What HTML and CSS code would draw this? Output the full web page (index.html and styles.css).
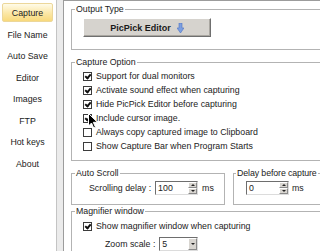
FILE: index.html
```html
<!DOCTYPE html>
<html lang="en">
<head>
    <meta charset="UTF-8">
    <meta name="viewport" content="width=device-width, initial-scale=1.0">
    <title>PicPick Options - Capture</title>
    <link rel="stylesheet" href="styles.css">
</head>
<body>

    <div class="app">
        <nav class="menu">
            <div class="menu-item active">Capture</div>
            <div class="menu-item">File Name</div>
            <div class="menu-item">Auto Save</div>
            <div class="menu-item">Editor</div>
            <div class="menu-item">Images</div>
            <div class="menu-item">FTP</div>
            <div class="menu-item">Hot keys</div>
            <div class="menu-item">About</div>
        </nav>

        <main class="panel">
            <fieldset class="group">
                <legend>Output Type</legend>
                <div class="group-body output-body">
                    <button class="editor-btn">
                        PicPick Editor
                        <svg width="7" height="10" viewBox="0 0 7 10">
                            <path d="M2 0h3v5h2L3.5 10 0 5h2z" fill="#7c9fe0" stroke="#4f74c4" stroke-width="0.6"/>
                        </svg>
                    </button>
                </div>
            </fieldset>

            <fieldset class="group">
                <legend>Capture Option</legend>
                <div class="group-body options-body">
                    <div class="check"><span class="box checked"></span>Support for dual monitors</div>
                    <div class="check"><span class="box checked"></span>Activate sound effect when capturing</div>
                    <div class="check"><span class="box checked"></span>Hide PicPick Editor before capturing</div>
                    <div class="check cursor-row">
                        <span class="box checked"></span>Include cursor image.
                        <!-- mouse pointer caught in the screenshot -->
                        <svg class="pointer" width="10" height="16" viewBox="0 0 10 16">
                            <path d="M0.5 0.5v12.5l3-3 2.2 5 1.8-0.8-2.2-4.9h4.2z" fill="#000" stroke="#fff" stroke-width="1"/>
                        </svg>
                    </div>
                    <div class="check"><span class="box"></span>Always copy captured image to Clipboard</div>
                    <div class="check"><span class="box"></span>Show Capture Bar when Program Starts</div>
                </div>
            </fieldset>

            <div class="pair">
                <fieldset class="group scroll-group">
                    <legend>Auto Scroll</legend>
                    <div class="group-body field-row scroll-body">
                        <span>Scrolling delay :</span>
                        <div class="spin">
                            <span class="spin-input">100</span>
                            <span class="spin-btns"><i class="up"></i><i class="down"></i></span>
                        </div>
                        <span>ms</span>
                    </div>
                </fieldset>
                <fieldset class="group delay-group">
                    <legend>Delay before capture</legend>
                    <div class="group-body field-row delay-body">
                        <div class="spin">
                            <span class="spin-input">0</span>
                            <span class="spin-btns"><i class="up"></i><i class="down"></i></span>
                        </div>
                        <span>ms</span>
                    </div>
                </fieldset>
            </div>

            <fieldset class="group">
                <legend>Magnifier window</legend>
                <div class="group-body magnifier-body">
                    <div class="check"><span class="box checked"></span>Show magnifier window when capturing</div>
                    <div class="field-row zoom-row">
                        <span>Zoom scale :</span>
                        <div class="select"><span class="select-value">5</span><span class="select-btn"><i class="down"></i></span></div>
                    </div>
                </div>
            </fieldset>
        </main>
    </div>

</body>
</html>
```

FILE: styles.css
```css
html, body {
    margin: 0;
    padding: 0;
    overflow: hidden;
}
body {
    font-family: "Liberation Sans", Arial, sans-serif;
    font-size: 8.8px;
    color: #222;
    background-color: #ebebeb;
}
.app {
    display: flex;
    width: 380px;
    height: 251px;
}
.menu {
    width: 51px;
    flex-shrink: 0;
    padding: 3px 3px 0 2px;
    background: white;
    border-right: 1px solid #c4c4c4;
    display: flex;
    flex-direction: column;
    gap: 2.5px;
}
.menu-item {
    height: 19px;
    line-height: 19px;
    text-align: center;
    border: 1px solid transparent;
    box-sizing: border-box;
}
.menu-item.active {
    background: linear-gradient(#fffbe8, #fbe7a6 55%, #f8d97c);
    border-color: #ecd79a;
    border-radius: 2px;
}
.panel {
    flex: 1;
    margin-left: 6px;
    padding: 0 0 0 7px;
    background: white;
    border-left: 1px solid #9c9c9c;
    border-top: 1px solid #9c9c9c;
}
.group {
    margin: 0;
    padding: 0;
    border: 1px solid #b3b3b3;
    box-shadow: inset 1px 1px 0 #fff;
    min-width: 0;
}
.group legend {
    margin-left: 3px;
    padding: 0 1px;
    line-height: 12px;
}
.panel > .group:first-child {
    margin-top: 2px;
}
.output-body {
    padding: 3px 0 12px 11px;
}
.editor-btn {
    width: 128px;
    height: 19px;
    padding: 0;
    font-family: inherit;
    font-size: 9px;
    font-weight: bold;
    color: #1a1a1a;
    background: #d6d3ce;
    border: 1px solid;
    border-color: #fff #6f6f6f #6f6f6f #fff;
    box-shadow: inset -1px -1px 0 #a9a6a0;
    display: flex;
    align-items: center;
    justify-content: center;
    gap: 6px;
}
.panel > .group + .group,
.panel > .pair {
    margin-top: 6px;
}
.options-body {
    padding: 1px 0 7px 11px;
}
.check {
    height: 14px;
    display: flex;
    align-items: center;
    gap: 4px;
    white-space: nowrap;
}
.box {
    width: 9px;
    height: 9px;
    box-sizing: border-box;
    border: 1px solid #3c3c3c;
    background: white;
    flex-shrink: 0;
    position: relative;
}
.box.checked::after {
    content: "";
    position: absolute;
    left: 1px;
    top: 0px;
    width: 2px;
    height: 4px;
    border: solid #111;
    border-width: 0 2px 2px 0;
    transform: rotate(40deg);
    margin-left: 1px;
}
.cursor-row {
    position: relative;
}
.pointer {
    position: absolute;
    left: 5px;
    top: 2px;
}
.pair {
    display: flex;
    gap: 8px;
}
.scroll-group {
    width: 152px;
    flex-shrink: 0;
}
.delay-group {
    flex: 1;
}
.delay-group legend {
    margin-left: 2px;
    letter-spacing: -0.1px;
}
.field-row {
    display: flex;
    align-items: center;
    gap: 4px;
    white-space: nowrap;
}
.scroll-body {
    height: 16px;
    padding: 1px 0 8px 17px;
}
.delay-body {
    height: 16px;
    padding: 1px 0 8px 12px;
    gap: 3px;
}
.spin {
    display: flex;
    height: 14px;
    box-sizing: border-box;
    border: 1px solid;
    border-color: #6e6e6e #dcdcdc #dcdcdc #6e6e6e;
}
.spin-input {
    width: 30px;
    padding-left: 2px;
    line-height: 12px;
    background: white;
}
.spin-btns {
    width: 9px;
    display: flex;
    flex-direction: column;
}
.spin-btns i,
.select-btn {
    flex: 1;
    background: #d8d5d0;
    border: 1px solid;
    border-color: #fff #8a8a8a #8a8a8a #fff;
    position: relative;
}
.spin-btns i::after,
.select-btn i::after {
    content: "";
    position: absolute;
    left: 50%;
    top: 50%;
    margin: -1px 0 0 -2px;
    border-left: 2px solid transparent;
    border-right: 2px solid transparent;
}
.up::after {
    border-bottom: 2px solid #222;
}
.down::after {
    border-top: 2px solid #222;
}
.magnifier-body {
    padding: 2px 0 0 11px;
}
.zoom-row {
    height: 14px;
    margin-top: 4px;
    padding-left: 22px;
    gap: 4px;
}
.select {
    display: flex;
    width: 39px;
    height: 14px;
    box-sizing: border-box;
    border: 1px solid;
    border-color: #6e6e6e #dcdcdc #dcdcdc #6e6e6e;
    background: white;
}
.select-value {
    flex: 1;
    padding-left: 2px;
    line-height: 12px;
}
.select-btn {
    flex: 0 0 9px;
    box-sizing: border-box;
}
.select-btn i {
    display: block;
    position: absolute;
    inset: 0;
}
```
